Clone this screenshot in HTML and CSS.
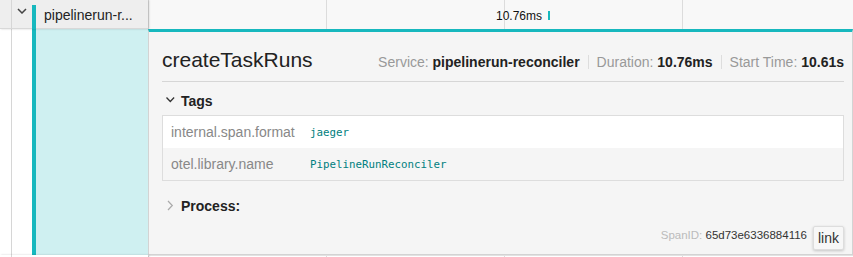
FILE: index.html
```html
<!DOCTYPE html>
<html lang="en">
<head>
  <meta charset="UTF-8" />
  <meta name="viewport" content="width=device-width, initial-scale=1" />
  <title>Trace – createTaskRuns</title>
  <link rel="stylesheet" href="styles.css">
</head>
<body>

  <div class="trace">

    <div class="span-row">
      <div class="name-col">
        <div class="indent"></div>
        <div class="toggle">
          <svg width="10" height="6" viewBox="0 0 10 6"><path d="M1 1 L5 5 L9 1" fill="none" stroke="#444" stroke-width="1.5"/></svg>
        </div>
        <div class="span-name">pipelinerun-r...</div>
      </div>
      <div class="span-view">
        <div class="ticks"><span></span><span></span><span></span><span></span></div>
        <div class="bar"><span class="bar-label">10.76ms</span></div>
      </div>
    </div>

    <div class="detail-row">
      <div class="detail-name-col">
        <div class="indent white"></div>
        <div class="toggle white"></div>
        <div class="accent"></div>
      </div>

      <div class="detail-info">
        <div class="detail-header">
          <h2 class="op-name">createTaskRuns</h2>
          <ul class="overview">
            <li><span class="label">Service:</span> <strong>pipelinerun-reconciler</strong></li>
            <li class="sep"></li>
            <li><span class="label">Duration:</span> <strong>10.76ms</strong></li>
            <li class="sep"></li>
            <li><span class="label">Start Time:</span> <strong>10.61s</strong></li>
          </ul>
        </div>

        <div class="section-toggle tags-toggle">
          <svg width="14" height="14" viewBox="0 0 14 14"><path d="M2.5 3.5 L6.3 7.5 L10.1 3.5" fill="none" stroke="#333" stroke-width="1.3"/></svg>
          Tags
        </div>

        <table class="kv-table">
          <tr>
            <td class="kv-key">internal.span.format</td>
            <td class="kv-value">jaeger</td>
          </tr>
          <tr>
            <td class="kv-key">otel.library.name</td>
            <td class="kv-value">PipelineRunReconciler</td>
          </tr>
        </table>

        <div class="section-toggle process-toggle">
          <svg width="14" height="14" viewBox="0 0 14 14"><path d="M4 2 L8.3 6.5 L4 11" fill="none" stroke="#aaa" stroke-width="1.2"/></svg>
          Process:
        </div>

        <div class="detail-footer">
          <span class="span-id"><span class="label">SpanID:</span> 65d73e6336884116</span>
          <button class="link-btn">link</button>
        </div>
      </div>
    </div>

    <div class="span-row next">
      <div class="name-col">
        <div class="indent"></div>
      </div>
      <div class="span-view">
        <div class="ticks"><span></span><span></span><span></span><span></span></div>
      </div>
    </div>

  </div>

</body>
</html>
```

FILE: styles.css
```css
body {
  margin: 0;
  font-family: "Liberation Sans", Arial, sans-serif;
  color: #222;
  background: #fff;
  overflow: hidden;
}

.trace {
  width: 853px;
}

/* span row */

.span-row {
  display: flex;
  height: 29px;
}

.name-col {
  width: 148px;
  flex: none;
  display: flex;
  background: #eee;
  box-shadow: inset 0 -1px #d8d8d8, 1px 0 2px rgba(0,0,0,0.18);
  position: relative;
  z-index: 1;
}

.indent {
  width: 11px;
  flex: none;
  border-right: 1px solid #d6d6d6;
}

.toggle {
  width: 20px;
  flex: none;
  padding-left: 5px;
  box-sizing: border-box;
}

.toggle svg {
  display: block;
  margin-top: 8px;
}

.white {
  background: #fff;
}

.span-name {
  flex: 1;
  margin-top: 5px;
  border-left: 4px solid #17b8be;
  padding-left: 8px;
  font-size: 14px;
  line-height: 20px;
  white-space: nowrap;
  overflow: hidden;
}

.span-view {
  flex: 1;
  position: relative;
  background: #f8f8f8;
  overflow: hidden;
}

.ticks {
  position: absolute;
  top: 0;
  bottom: 0;
  left: 0;
  display: flex;
}

.ticks span {
  width: 177px;
  flex: none;
  border-left: 1px solid #dcdcdc;
}

.bar {
  position: absolute;
  left: 400px;
  top: 11px;
  width: 2px;
  height: 9px;
  background: #17b8be;
}

.bar-label {
  position: absolute;
  right: 100%;
  top: -1px;
  margin-right: 6px;
  font-size: 12px;
  line-height: 12px;
  color: #111;
  white-space: nowrap;
}

/* detail row */

.detail-row {
  display: flex;
}

.detail-name-col {
  width: 148px;
  flex: none;
  display: flex;
}

.accent {
  flex: 1;
  border-left: 4px solid #17b8be;
  background: #cff0f1;
}

.detail-info {
  flex: 1;
  background: #f5f5f5;
  border: 1px solid #d3d3d3;
  border-top: 3px solid #17b8be;
  padding: 0 8px 4px 13px;
}

.detail-header {
  display: flex;
  justify-content: space-between;
  align-items: baseline;
  padding: 15px 0 9px;
  border-bottom: 1px solid #d6d6d6;
}

.op-name {
  margin: 0;
  font-size: 21px;
  font-weight: normal;
  line-height: 25px;
  color: #222;
}

.overview {
  display: flex;
  align-items: baseline;
  margin: 0;
  padding: 0;
  list-style: none;
  font-size: 14px;
}

.overview .label {
  color: #999;
}

.overview strong {
  color: #222;
}

.overview .sep {
  width: 1px;
  height: 14px;
  margin: 0 8px;
  background: #ddd;
  align-self: center;
}

.section-toggle {
  display: flex;
  align-items: center;
  font-size: 14px;
  font-weight: bold;
  line-height: 20px;
  color: #222;
}

.section-toggle svg {
  margin: 0 3px 0 2px;
}

.tags-toggle {
  margin-top: 9px;
}

.process-toggle {
  margin-top: 15px;
}

.kv-table {
  width: 100%;
  margin-top: 4px;
  border: 1px solid #ddd;
  border-spacing: 0;
  background: #fff;
  table-layout: fixed;
}

.kv-table tr:nth-child(2n) td {
  background: #f5f5f5;
}

.kv-table td {
  height: 32px;
  padding: 0 8px;
  vertical-align: middle;
}

.kv-key {
  width: 123px;
  font-size: 14px;
  color: #888;
  white-space: nowrap;
}

.kv-value {
  font-family: "DejaVu Sans Mono", monospace;
  font-size: 10.8px;
  color: #008080;
}

.detail-footer {
  display: flex;
  justify-content: flex-end;
  align-items: flex-start;
  margin-top: 10px;
}

.span-id {
  margin-top: 1px;
  margin-right: 6px;
  font-size: 11.5px;
  line-height: 16px;
  color: #333;
}

.span-id .label {
  color: #bbb;
}

.link-btn {
  height: 24px;
  padding: 0 4px;
  font-family: inherit;
  font-size: 14px;
  color: #333;
  background: #f7f7f7;
  border: 1px solid #ddd;
  border-radius: 2px;
  box-shadow: 0 1px 3px rgba(0,0,0,0.2);
}

/* next row */

.span-row.next {
  height: 12px;
}

.span-row.next .name-col {
  background: #fff;
  box-shadow: 1px 0 2px rgba(0,0,0,0.18);
}

.span-row.next .span-view {
  background: #fff;
  border-top: 1px solid #e2e2e2;
}
```
